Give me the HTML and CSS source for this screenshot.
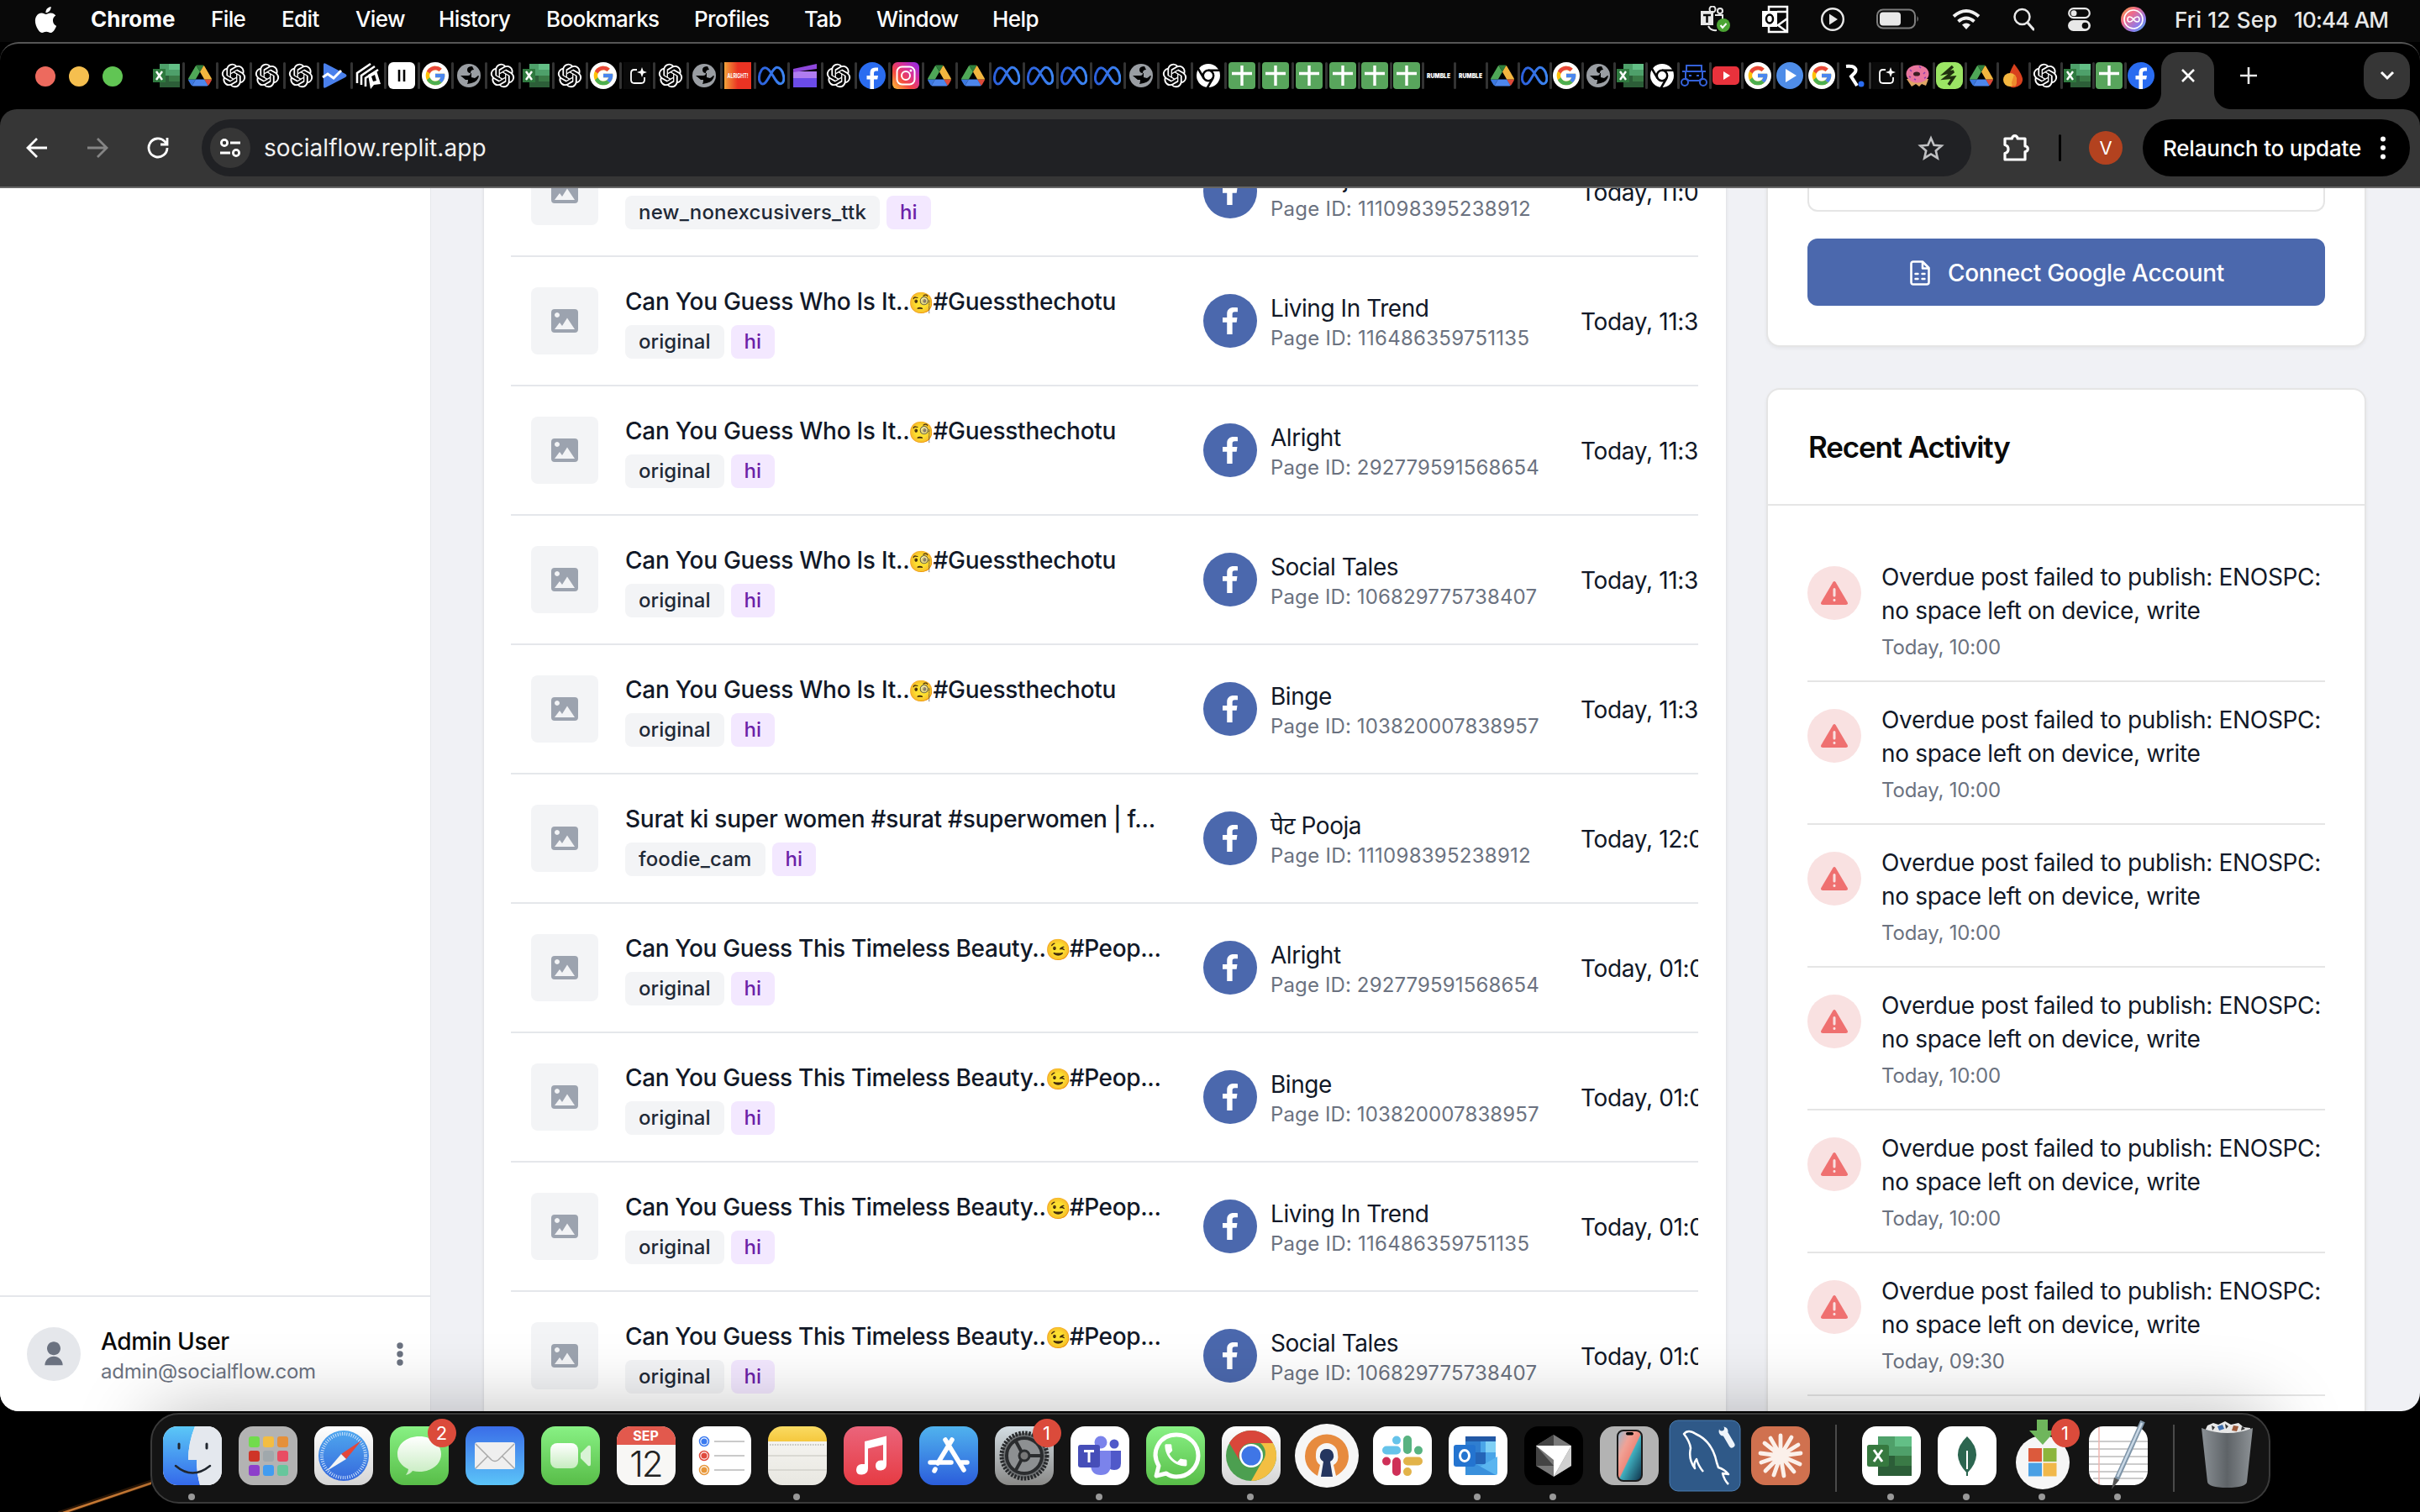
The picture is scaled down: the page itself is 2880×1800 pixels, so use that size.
FILE: index.html
```html
<!DOCTYPE html>
<html lang="en">
<head>
<meta charset="utf-8">
<title>SocialFlow</title>
<link rel="stylesheet" href="styles.css">
</head>
<body>
<svg class="defs" width="0" height="0" aria-hidden="true">
  <defs>
    <linearGradient id="g-ig" x1="0" y1="1" x2="1" y2="0"><stop offset="0" stop-color="#fec53a"/><stop offset=".35" stop-color="#f4483f"/><stop offset=".65" stop-color="#d62f9b"/><stop offset="1" stop-color="#8a2bf0"/></linearGradient>
    <linearGradient id="g-alright"><stop offset="0" stop-color="#f2a33a"/><stop offset=".5" stop-color="#ea3323"/></linearGradient>
    <linearGradient id="g-bubble" x1="0" y1="0" x2="0" y2="1"><stop offset="0" stop-color="#fff"/><stop offset="1" stop-color="#c7ecc0"/></linearGradient>
    <linearGradient id="g-finder" x1="0" y1="0" x2="0" y2="1"><stop offset="0" stop-color="#5bc8f7"/><stop offset="1" stop-color="#3469ea"/></linearGradient>
    <linearGradient id="g-safari" x1="0" y1="0" x2="0" y2="1"><stop offset="0" stop-color="#4fa7ee"/><stop offset="1" stop-color="#3568dc"/></linearGradient>
    <linearGradient id="g-phone" x1="0" y1="0" x2="1" y2="1"><stop offset="0" stop-color="#8fb8d0"/><stop offset=".3" stop-color="#f0a296"/><stop offset=".5" stop-color="#f08a7c"/><stop offset=".53" stop-color="#3fb0c0"/><stop offset="1" stop-color="#0d2c45"/></linearGradient>
    <linearGradient id="g-trash"><stop offset="0" stop-color="#8a9095"/><stop offset=".5" stop-color="#5e6367"/><stop offset="1" stop-color="#8d9296"/></linearGradient>
    <linearGradient id="g-siri" x1="0" y1="0" x2="1" y2="1"><stop offset="0" stop-color="#f0a33e"/><stop offset=".35" stop-color="#f06a8a"/><stop offset=".7" stop-color="#8f7bea"/><stop offset="1" stop-color="#45b6e8"/></linearGradient>
    <linearGradient id="g-meta"><stop offset="0" stop-color="#2b5fdc"/><stop offset="1" stop-color="#3d86f2"/></linearGradient>
  </defs>
  <symbol id="excel" viewBox="0 0 32 32"><path fill="#21a366" d="M8 2h24v28H8z"/><path fill="#63bf86" d="M19 2h13v7H19z"/><path fill="#3a7a46" d="M8 16h24v7H8z"/><path fill="#4ea06a" d="M8 2h11v7H8zM8 9h24v7H8z"/><path fill="#2c5e38" d="M8 16h11v14H8zM19 23h13v7H19z"/><path fill="#2f7a3f" d="M0 8h15v16H0z"/><path stroke="#fff" stroke-width="2.4" d="M4 11l7 10M11 11L4 21"/></symbol>
  <symbol id="drive" viewBox="0 0 87.3 78"><path fill="#3b78e0" d="m6.6 66.85 3.85 6.65c.8 1.4 1.95 2.5 3.3 3.3l13.75-23.8h-27.5c0 1.55.4 3.1 1.2 4.5z"/><path fill="#4fa757" d="m43.65 25-13.75-23.8c-1.35.8-2.5 1.9-3.3 3.3l-25.4 44a9.06 9.06 0 0 0-1.2 4.5h27.5z"/><path fill="#dc4a3a" d="m73.55 76.8c1.35-.8 2.5-1.9 3.3-3.3l1.6-2.75 7.65-13.25c.8-1.4 1.2-2.95 1.2-4.5h-27.502l5.852 11.5z"/><path fill="#2d7d3a" d="m43.65 25 13.75-23.8c-1.35-.8-2.9-1.2-4.5-1.2h-18.5c-1.6 0-3.15.45-4.5 1.2z"/><path fill="#4d86ec" d="m59.8 53h-32.3l-13.75 23.8c1.35.8 2.9 1.2 4.5 1.2h50.8c1.6 0 3.15-.45 4.5-1.2z"/><path fill="#f3b63f" d="m73.4 26.5-12.7-22c-.8-1.4-1.95-2.5-3.3-3.3l-13.75 23.8 16.15 28h27.45c0-1.55-.4-3.1-1.2-4.5z"/></symbol>
  <symbol id="gpt" viewBox="-1.5 -1.5 27 27"><path fill="#fff" d="M22.2819 9.8211a5.9847 5.9847 0 0 0-.5157-4.9108 6.0462 6.0462 0 0 0-6.5098-2.9A6.0651 6.0651 0 0 0 4.9807 4.1818a5.9847 5.9847 0 0 0-3.9977 2.9 6.0462 6.0462 0 0 0 .7427 7.0966 5.98 5.98 0 0 0 .511 4.9107 6.051 6.051 0 0 0 6.5146 2.9001A5.9847 5.9847 0 0 0 13.2599 24a6.0557 6.0557 0 0 0 5.7718-4.2058 5.9894 5.9894 0 0 0 3.9977-2.9001 6.0557 6.0557 0 0 0-.7475-7.0729zm-9.022 12.6081a4.4755 4.4755 0 0 1-2.8764-1.0408l.1419-.0804 4.7783-2.7582a.7948.7948 0 0 0 .3927-.6813v-6.7369l2.02 1.1686a.071.071 0 0 1 .038.052v5.5826a4.504 4.504 0 0 1-4.4945 4.4944zm-9.6607-4.1254a4.4708 4.4708 0 0 1-.5346-3.0137l.142.0852 4.783 2.7582a.7712.7712 0 0 0 .7806 0l5.8428-3.3685v2.3324a.0804.0804 0 0 1-.0332.0615L9.74 19.9502a4.4992 4.4992 0 0 1-6.1408-1.6464zM2.3408 7.8956a4.485 4.485 0 0 1 2.3655-1.9728V11.6a.7664.7664 0 0 0 .3879.6765l5.8144 3.3543-2.0201 1.1685a.0757.0757 0 0 1-.071 0l-4.8303-2.7865A4.504 4.504 0 0 1 2.3408 7.872zm16.5963 3.8558L13.1038 8.364 15.1192 7.2a.0757.0757 0 0 1 .071 0l4.8303 2.7913a4.4944 4.4944 0 0 1-.6765 8.1042v-5.6772a.79.79 0 0 0-.407-.667zm2.0107-3.0231l-.142-.0852-4.7735-2.7818a.7759.7759 0 0 0-.7854 0L9.409 9.2297V6.8974a.0662.0662 0 0 1 .0284-.0615l4.8303-2.7866a4.4992 4.4992 0 0 1 6.6802 4.66zM8.3065 12.863l-2.02-1.1638a.0804.0804 0 0 1-.038-.0567V6.0742a4.4992 4.4992 0 0 1 7.3757-3.4537l-.142.0805L8.704 5.459a.7948.7948 0 0 0-.3927.6813zm1.0976-2.3654l2.602-1.4998 2.6069 1.4998v2.9994l-2.5974 1.4997-2.6067-1.4997Z"/></symbol>
  <symbol id="pulse" viewBox="0 0 32 32"><path fill="#4a80ec" d="M3 3Q3 0 6 2l23 12q3 2 0 4L6 30q-3 2-3-1z"/><path fill="none" stroke="#fff" stroke-width="3" d="M2 18l6-4 7 5 9-9"/></symbol>
  <symbol id="linear" viewBox="0 0 32 32"><path fill="none" stroke="#fff" stroke-width="2.600" d="M3 25V13L19 2M8 27V16L24 5M13 29V19l15-10"/><path fill="#fff" d="M16 15l10-5 5 16-8 1-4 5z"/><path fill="#000" d="M20 17l4-2 2 7-4 1z"/></symbol>
  <symbol id="pause" viewBox="0 0 32 32"><rect width="32" height="32" rx="6" fill="#fff"/><path stroke="#000" stroke-width="2.600" d="M13 9v14M19 9v14"/></symbol>
  <symbol id="google" viewBox="0 0 48 48"><circle cx="24" cy="24" r="24" fill="#fff"/><g transform="translate(3.600 3.600) scale(.85)"><path fill="#FFC107" d="M43.611 20.083H42V20H24v8h11.303c-1.649 4.657-6.080 8-11.303 8-6.627 0-12-5.373-12-12s5.373-12 12-12c3.059 0 5.842 1.154 7.961 3.039l5.657-5.657C34.046 6.053 29.268 4 24 4 12.955 4 4 12.955 4 24s8.955 20 20 20 20-8.955 20-20c0-1.341-.138-2.650-.389-3.917z"/><path fill="#e8473a" d="M6.306 14.691l6.571 4.819C14.655 15.108 18.961 12 24 12c3.059 0 5.842 1.154 7.961 3.039l5.657-5.657C34.046 6.053 29.268 4 24 4 16.318 4 9.656 8.337 6.306 14.691z"/><path fill="#4CAF50" d="M24 44c5.166 0 9.860-1.977 13.409-5.192l-6.190-5.238A11.910 11.910 0 0 1 24 36c-5.202 0-9.619-3.317-11.283-7.946l-6.522 5.025C9.505 39.556 16.227 44 24 44z"/><path fill="#4a86ee" d="M43.611 20.083H42V20H24v8h11.303a12.040 12.040 0 0 1-4.087 5.571l6.190 5.238C36.971 39.205 44 34 44 24c0-1.341-.138-2.650-.389-3.917z"/></g></symbol>
  <symbol id="globe" viewBox="0 0 32 32"><circle cx="16" cy="16" r="14" fill="#9a9ea3"/><path fill="#000" d="M20 5q-6 0-6 4t4 4q0 3-3 3H6l6 5h3q0 3-1 5l5-1q8-2 9-9l-4 1q-2-4-6-4 0-4 4-4z"/><path fill="#9a9ea3" d="M19 12h5l2 5-3 2-4-1z"/></symbol>
  <symbol id="spark" viewBox="0 0 32 32"><rect width="32" height="32" fill="#0a0a0a"/><path fill="none" stroke="#fff" stroke-width="1.800" d="M16 9h-3q-4 0-4 4v8q0 4 4 4h8q4 0 4-4v-3"/><path fill="#fff" d="M22 6l1.600 4.400L28 12l-4.400 1.600L22 18l-1.600-4.400L16 12l4.400-1.600z"/></symbol>
  <symbol id="meta" viewBox="0 0 32 32"><path fill="none" stroke="url(#g-meta)" stroke-width="3" d="M16 13C13 8 8 4 4.500 9S0 23 4 25.500s7-4 12-12.500 8-8 11.500-4 5 14.500.5 16.500-8-6-12-12.500z"/></symbol>
  <symbol id="clap" viewBox="0 0 32 32"><path fill="#6b4be8" d="M2 11h28v19H2z"/><path fill="#b07cf0" d="M2 11h28v8H2z"/><path fill="#8f48dc" d="M2 8L30 2v6L2 12z"/></symbol>
  <symbol id="fb" viewBox="0 0 32 32"><circle cx="16" cy="16" r="16" fill="#2a6cf0"/><path fill="#fff" d="M13.500 32V20.500H9.500V16h4v-3.500q0-6 6-6h3.500v4h-2.500q-2.500 0-2.500 2.500v3h5l-.8 4.500H18V32z"/></symbol>
  <symbol id="insta" viewBox="0 0 32 32"><rect width="32" height="32" rx="6" fill="url(#g-ig)"/><rect x="5.500" y="5.500" width="21" height="21" rx="6" fill="none" stroke="#fff" stroke-width="2"/><circle cx="16" cy="16" r="5" fill="none" stroke="#fff" stroke-width="2"/><circle cx="22" cy="10" r="1.500" fill="#fff"/></symbol>
  <symbol id="chromebw" viewBox="0 0 32 32"><circle cx="16" cy="16" r="14" fill="#fff"/><circle cx="16" cy="16" r="6.200" fill="#fff" stroke="#000" stroke-width="2.500"/><path stroke="#000" stroke-width="2.500" d="M16 9.800h14M10.500 19L3.500 7M21.500 19l-7 12"/></symbol>
  <symbol id="sheets" viewBox="0 0 32 32"><rect width="32" height="32" rx="4" fill="#58a55c"/><path stroke="#fff" stroke-width="3.400" d="M16 4v24M4 13.500h24"/></symbol>
  <symbol id="robot" viewBox="0 0 32 32"><path fill="none" stroke="#3461d8" stroke-width="2" d="M7 4h18v7H7zM2 11h28M6 11v8l4 3h12l4-3v-8M10 16h3M19 16h3"/><circle cx="5" cy="24" r="4" fill="none" stroke="#3461d8" stroke-width="2"/><circle cx="27" cy="24" r="4" fill="none" stroke="#3461d8" stroke-width="2"/></symbol>
  <symbol id="yt" viewBox="0 0 32 32"><rect y="5" width="32" height="22" rx="5" fill="#e8323c"/><path fill="#fff" d="M13 11l8 5-8 5z"/></symbol>
  <symbol id="play" viewBox="0 0 32 32"><circle cx="16" cy="16" r="16" fill="#4f8de8"/><path fill="#fff" d="M11 8l13 8-13 8z"/></symbol>
  <symbol id="rdot" viewBox="0 0 32 32"><path fill="none" stroke="#fff" stroke-width="4" d="M7 5c10-1 14 3 10 8l-4 4 7 11"/><circle cx="25" cy="26" r="3.500" fill="#2a6cf0"/></symbol>
  <symbol id="donut" viewBox="0 0 32 32"><path fill="#dfa565" d="M3 20h26l-3 8-5-2-3 3-4-3-5 3z"/><ellipse cx="16" cy="14" rx="13.500" ry="10.500" fill="#e9769f"/><ellipse cx="15" cy="14" rx="4" ry="2.600" fill="#3a1c22"/><path stroke="#8a3fae" stroke-width="1.500" d="M7 9l2 2M18 5l2 2M25 12l-2 2M6 17l2 1M24 19l2-1M12 20l2 1"/></symbol>
  <symbol id="bolt" viewBox="0 0 32 32"><rect width="32" height="32" rx="9" fill="#9be564"/><path fill="none" stroke="#20300f" stroke-width="3.500" d="M20 5l-9 8 10-2-10 8 10-1-6 9"/></symbol>
  <symbol id="fire" viewBox="0 0 32 32"><path fill="#d9411e" d="M17 2q11 14 10 20t-9 8-8-8q0-8 7-20z"/><circle cx="12" cy="21" r="8" fill="#f4b63f"/><path fill="#ee8a2c" d="M17 15q5 6 2 13-5 2-5-4z"/></symbol>

  <symbol id="picture" viewBox="0 0 32 28"><path fill="#9ca3af" fill-rule="evenodd" d="M4 0h24q4 0 4 4v20q0 4-4 4H4q-4 0-4-4V4q0-4 4-4zm3 4a3 3 0 1 0 .01 0zM4 24h24L19 10.500 13 20l-3-4z"/></symbol>
  <symbol id="f" viewBox="0 0 264 512" preserveAspectRatio="none"><path fill="#fff" d="M76.700 512V283H0v-91h76.700v-71.700C76.700 42.400 124.300 0 193.800 0c33.300 0 61.900 2.500 70.200 3.600V85h-48.200c-37.800 0-45.100 18-45.100 44.300V192H256l-11.700 91h-73.600v229"/></symbol>
  <symbol id="warn" viewBox="0 0 32 28"><path fill="#ef7070" d="M14.300 1.200q1.700-2.200 3.400 0l14 23.800q1 3-1.900 3H2.200Q-.7 28 .3 25z"/><path stroke="#f9e1e1" stroke-width="3" stroke-linecap="round" d="M16 9.500v7.500M16 22.300v.1"/></symbol>
</svg>

<div class="desktop">
  <header class="menubar">
    <svg class="apple" viewBox="0 0 24 24"><path fill="#fff" d="M12.152 6.896c-.948 0-2.415-1.078-3.960-1.040-2.040.027-3.910 1.183-4.961 3.014-2.117 3.675-.546 9.103 1.519 12.090 1.013 1.454 2.208 3.090 3.792 3.039 1.520-.065 2.090-.987 3.935-.987 1.831 0 2.350.987 3.960.948 1.637-.026 2.676-1.480 3.676-2.948 1.156-1.688 1.636-3.325 1.662-3.415-.039-.013-3.182-1.221-3.220-4.857-.026-3.040 2.480-4.494 2.597-4.559-1.429-2.090-3.623-2.324-4.390-2.376-2-.156-3.675 1.090-4.610 1.090zM15.530 3.830c.843-1.012 1.400-2.427 1.245-3.830-1.207.052-2.662.805-3.532 1.818-.780.896-1.454 2.338-1.273 3.714 1.338.104 2.715-.688 3.559-1.701"/></svg>
    <nav class="menus"><b>Chrome</b><span>File</span><span>Edit</span><span>View</span><span>History</span><span>Bookmarks</span><span>Profiles</span><span>Tab</span><span>Window</span><span>Help</span></nav>
    <div class="status">
      <svg width="36" height="32" viewBox="0 0 36 32"><path fill="#e8e8e8" d="M1 6h15v17H1z"/><path fill="none" stroke="#0a0a0a" stroke-width="2.500" d="M4 11h9M8.500 11v9"/><g fill="none" stroke="#e8e8e8" stroke-width="2"><circle cx="15" cy="4" r="3.500"/><circle cx="24" cy="6" r="3"/><path d="M18 11h9v10M10 24q3 6 10 5"/></g><circle cx="28" cy="23" r="8" fill="#4ba533"/><path fill="none" stroke="#fff" stroke-width="2" d="M24.500 23l2.500 3 4.500-5"/></svg>
      <svg width="32" height="34" viewBox="0 0 32 34"><path fill="none" stroke="#fff" stroke-width="2.500" d="M8 8V2h22v30H8v-6M30 16l-11 8 11 8M18 8h12"/><path fill="#fff" d="M0 7h18v19H0z"/><ellipse cx="9" cy="16.500" rx="4" ry="5" fill="none" stroke="#000" stroke-width="2.500"/></svg>
      <svg width="28" height="28" viewBox="0 0 28 28"><circle cx="14" cy="14" r="12.800" fill="none" stroke="#e8e8e8" stroke-width="2.400"/><path fill="#e8e8e8" d="M10 7.500l10 6.500-10 6.500z"/></svg>
      <svg width="52" height="26" viewBox="0 0 52 26"><rect x="1" y="1.500" width="45" height="22" rx="7" fill="none" stroke="#7d7d7d" stroke-width="2"/><rect x="4" y="4.500" width="25" height="16" rx="4" fill="#e8e8e8"/><path fill="#7d7d7d" d="M48.500 9q3 3.500 0 7z"/></svg>
      <svg width="34" height="26" viewBox="0 0 34 26"><g fill="none" stroke="#f0f0f0" stroke-width="4"><path d="M2 9.500q15-13 30 0M7.500 15.500q9.500-8 19 0"/></g><path fill="#f0f0f0" d="M12 19.500q5-4 10 0l-5 5.500z"/></svg>
      <svg width="26" height="28" viewBox="0 0 26 28"><circle cx="11.500" cy="11" r="9" fill="none" stroke="#e8e8e8" stroke-width="2.500"/><path stroke="#e8e8e8" stroke-width="3" stroke-linecap="round" d="M18 18l7 8"/></svg>
      <svg class="cc" width="27" height="28" viewBox="0 0 27 28"><rect x="1.200" y="1.200" width="24.600" height="11" rx="5.500" fill="none" stroke="#e8e8e8" stroke-width="2.200"/><circle cx="7" cy="6.700" r="3.500" fill="#e8e8e8"/><rect y="15" width="27" height="13" rx="6.500" fill="#e8e8e8"/><circle cx="20.500" cy="21.500" r="3.800" fill="#0a0a0a"/></svg>
      <svg width="30" height="30" viewBox="0 0 30 30"><circle cx="15" cy="15" r="15" fill="url(#g-siri)"/><circle cx="15" cy="15" r="11" fill="none" stroke="#fff" stroke-width="1.600"/><path fill="none" stroke="#fff" stroke-width="1.600" d="M15 15c-3-4-7-4-7 0s4 4 7 0 7-4 7 0-4 4-7 0z"/></svg>
      <span class="date">Fri 12 Sep</span><span class="clock">10:44 AM</span>
    </div>
  </header>

  <section class="window">
    <div class="tabstrip">
      <div class="lights"><i class="red"></i><i class="yellow"></i><i class="green"></i></div>
      <div class="tabs">
        <div class="tab"><svg><use href="#excel"/></svg></div><div class="tab drv"><svg><use href="#drive"/></svg></div><div class="tab"><svg><use href="#gpt"/></svg></div><div class="tab"><svg><use href="#gpt"/></svg></div><div class="tab"><svg><use href="#gpt"/></svg></div><div class="tab"><svg><use href="#pulse"/></svg></div><div class="tab"><svg><use href="#linear"/></svg></div><div class="tab"><svg><use href="#pause"/></svg></div><div class="tab"><svg><use href="#google"/></svg></div><div class="tab"><svg><use href="#globe"/></svg></div>
        <div class="tab"><svg><use href="#gpt"/></svg></div><div class="tab"><svg><use href="#excel"/></svg></div><div class="tab"><svg><use href="#gpt"/></svg></div><div class="tab"><svg><use href="#google"/></svg></div><div class="tab"><svg><use href="#spark"/></svg></div><div class="tab"><svg><use href="#gpt"/></svg></div><div class="tab"><svg><use href="#globe"/></svg></div><div class="tab"><svg viewBox="0 0 32 32"><path fill="url(#g-alright)" d="M0 0h32v32H0z"/><text x="3.500" y="19" font-size="7" font-weight="700" fill="#fff" textLength="25" lengthAdjust="spacingAndGlyphs">ALRIGHT!</text></svg></div><div class="tab"><svg><use href="#meta"/></svg></div><div class="tab"><svg><use href="#clap"/></svg></div>
        <div class="tab"><svg><use href="#gpt"/></svg></div><div class="tab"><svg><use href="#fb"/></svg></div><div class="tab"><svg><use href="#insta"/></svg></div><div class="tab drv"><svg><use href="#drive"/></svg></div><div class="tab drv"><svg><use href="#drive"/></svg></div><div class="tab"><svg><use href="#meta"/></svg></div><div class="tab"><svg><use href="#meta"/></svg></div><div class="tab"><svg><use href="#meta"/></svg></div><div class="tab"><svg><use href="#meta"/></svg></div><div class="tab"><svg><use href="#globe"/></svg></div>
        <div class="tab"><svg><use href="#gpt"/></svg></div><div class="tab"><svg><use href="#chromebw"/></svg></div><div class="tab"><svg><use href="#sheets"/></svg></div><div class="tab"><svg><use href="#sheets"/></svg></div><div class="tab"><svg><use href="#sheets"/></svg></div><div class="tab narrow"><svg><use href="#sheets"/></svg></div><div class="tab narrow"><svg><use href="#sheets"/></svg></div><div class="tab narrow"><svg><use href="#sheets"/></svg></div><div class="tab narrow"><svg viewBox="0 0 32 32"><text x="2" y="19" font-size="8" font-weight="900" fill="#fff" textLength="28" lengthAdjust="spacingAndGlyphs">RUMBLE</text></svg></div><div class="tab narrow"><svg viewBox="0 0 32 32"><text x="2" y="19" font-size="8" font-weight="900" fill="#fff" textLength="28" lengthAdjust="spacingAndGlyphs">RUMBLE</text></svg></div>
        <div class="tab narrow drv"><svg><use href="#drive"/></svg></div><div class="tab narrow"><svg><use href="#meta"/></svg></div><div class="tab narrow"><svg><use href="#google"/></svg></div><div class="tab narrow"><svg><use href="#globe"/></svg></div><div class="tab narrow"><svg><use href="#excel"/></svg></div><div class="tab narrow"><svg><use href="#chromebw"/></svg></div><div class="tab narrow"><svg><use href="#robot"/></svg></div><div class="tab narrow"><svg><use href="#yt"/></svg></div><div class="tab narrow"><svg><use href="#google"/></svg></div><div class="tab narrow"><svg><use href="#play"/></svg></div>
        <div class="tab narrow"><svg><use href="#google"/></svg></div><div class="tab narrow"><svg><use href="#rdot"/></svg></div><div class="tab narrow"><svg><use href="#spark"/></svg></div><div class="tab narrow"><svg><use href="#donut"/></svg></div><div class="tab narrow"><svg><use href="#bolt"/></svg></div><div class="tab narrow drv"><svg><use href="#drive"/></svg></div><div class="tab narrow"><svg><use href="#fire"/></svg></div><div class="tab narrow"><svg><use href="#gpt"/></svg></div><div class="tab narrow"><svg><use href="#excel"/></svg></div><div class="tab narrow"><svg><use href="#sheets"/></svg></div>
        <div class="tab narrow last"><svg><use href="#fb"/></svg></div>
      </div>
      <div class="active-tab"><svg width="20" height="20" viewBox="0 0 20 20"><path stroke="#fff" stroke-width="2.600" d="M3 3l14 14M17 3L3 17"/></svg></div>
      <svg class="newtab" width="22" height="22" viewBox="0 0 22 22"><path stroke="#e8e8e8" stroke-width="2.600" d="M11 1v20M1 11h20"/></svg>
      <div class="tabsearch"><svg width="18" height="12" viewBox="0 0 18 12"><path fill="none" stroke="#fff" stroke-width="3" d="M2 2l7 7 7-7"/></svg></div>
    </div>

    <div class="toolbar">
      <div class="nav">
        <svg width="26" height="26" viewBox="0 0 26 26"><path fill="none" stroke="#fff" stroke-width="2.800" d="M25 13H3M13 2L2 13l11 11"/></svg>
        <svg width="26" height="26" viewBox="0 0 26 26"><path fill="none" stroke="#858585" stroke-width="2.800" d="M1 13h22M13 2l11 11-11 11"/></svg>
        <svg width="26" height="26" viewBox="0 0 26 26"><path fill="none" stroke="#fff" stroke-width="2.800" d="M24 13a11 11 0 1 1-3-7.600L24 9M24 1v8h-8"/></svg>
      </div>
      <div class="url">
        <span class="site"><svg width="26" height="24" viewBox="0 0 26 24"><g fill="none" stroke="#fff" stroke-width="2.800"><circle cx="6" cy="6" r="3.600"/><path d="M13 6h12M1 18h12"/><circle cx="20" cy="18" r="3.600"/></g></svg></span>
        <span class="address">socialflow.replit.app</span>
        <svg class="star" width="32" height="30" viewBox="0 0 32 30"><path fill="none" stroke="#c0c1c3" stroke-width="2.600" d="M16 3.500l3.600 8.200 9 .8-6.800 5.900 2 8.800L16 22.500l-7.800 4.700 2-8.800-6.800-5.900 9-.8z"/></svg>
      </div>
      <svg class="ext" width="34" height="34" viewBox="0 0 34 34"><path fill="none" stroke="#fff" stroke-width="3.200" stroke-linejoin="round" d="M4 6h8.500a3.300 3.300 0 0 1 6.600 0H28v9a3.300 3.300 0 0 1 0 6.600V31H4v-7.500q4-1 4-5t-4-5z"/></svg>
      <i class="sep"></i>
      <span class="profile">V</span>
      <div class="relaunch">Relaunch to update<svg width="8" height="28" viewBox="0 0 8 28"><g fill="#fff"><circle cx="4" cy="3.500" r="3"/><circle cx="4" cy="14" r="3"/><circle cx="4" cy="24.500" r="3"/></g></svg></div>
    </div>

    <div class="page">
      <aside class="sidebar">
        <div class="account">
          <span class="avatar"><svg width="32" height="32" viewBox="0 0 24 24"><path fill="#6b7280" d="M4 22a8 8 0 1 1 16 0H4zm8-9c-3.315 0-6-2.685-6-6s2.685-6 6-6 6 2.685 6 6-2.685 6-6 6z"/></svg></span>
          <div class="who"><div class="who-name">Admin User</div><div class="who-mail">admin@socialflow.com</div></div>
          <svg width="8" height="28" viewBox="0 0 8 28"><g fill="#6b7280"><circle cx="4" cy="4" r="3.700"/><circle cx="4" cy="14" r="3.700"/><circle cx="4" cy="24" r="3.700"/></g></svg>
        </div>
      </aside>

      <main class="posts"><div class="scroll">
        <div class="row"><span class="thumb"><svg><use href="#picture"/></svg></span><div class="info"><div class="title">&nbsp;</div><div class="tags"><span class="tag wide">new_nonexcusivers_ttk</span><span class="tag lang">hi</span></div></div><span class="fbc"><svg><use href="#f"/></svg></span><div class="pg"><div class="name">पेट Pooja</div><div class="pid loose">Page ID: 111098395238912</div></div><div class="time">Today, 11:00</div></div>
        <div class="row"><span class="thumb"><svg><use href="#picture"/></svg></span><div class="info"><div class="title">Can You Guess Who Is It..<span class="emoji">🧐</span>#Guessthechotu</div><div class="tags"><span class="tag">original</span><span class="tag lang">hi</span></div></div><span class="fbc"><svg><use href="#f"/></svg></span><div class="pg"><div class="name">Living In Trend</div><div class="pid loose">Page ID: 116486359751135</div></div><div class="time">Today, 11:30</div></div>
        <div class="row"><span class="thumb"><svg><use href="#picture"/></svg></span><div class="info"><div class="title">Can You Guess Who Is It..<span class="emoji">🧐</span>#Guessthechotu</div><div class="tags"><span class="tag">original</span><span class="tag lang">hi</span></div></div><span class="fbc"><svg><use href="#f"/></svg></span><div class="pg"><div class="name">Alright</div><div class="pid">Page ID: 292779591568654</div></div><div class="time">Today, 11:30</div></div>
        <div class="row"><span class="thumb"><svg><use href="#picture"/></svg></span><div class="info"><div class="title">Can You Guess Who Is It..<span class="emoji">🧐</span>#Guessthechotu</div><div class="tags"><span class="tag">original</span><span class="tag lang">hi</span></div></div><span class="fbc"><svg><use href="#f"/></svg></span><div class="pg"><div class="name">Social Tales</div><div class="pid">Page ID: 106829775738407</div></div><div class="time">Today, 11:30</div></div>
        <div class="row"><span class="thumb"><svg><use href="#picture"/></svg></span><div class="info"><div class="title">Can You Guess Who Is It..<span class="emoji">🧐</span>#Guessthechotu</div><div class="tags"><span class="tag">original</span><span class="tag lang">hi</span></div></div><span class="fbc"><svg><use href="#f"/></svg></span><div class="pg"><div class="name">Binge</div><div class="pid">Page ID: 103820007838957</div></div><div class="time">Today, 11:30</div></div>
        <div class="row"><span class="thumb"><svg><use href="#picture"/></svg></span><div class="info"><div class="title">Surat ki super women #surat #superwomen | f...</div><div class="tags"><span class="tag wide">foodie_cam</span><span class="tag lang">hi</span></div></div><span class="fbc"><svg><use href="#f"/></svg></span><div class="pg"><div class="name">पेट Pooja</div><div class="pid loose">Page ID: 111098395238912</div></div><div class="time">Today, 12:00</div></div>
        <div class="row"><span class="thumb"><svg><use href="#picture"/></svg></span><div class="info"><div class="title long">Can You Guess This Timeless Beauty..<span class="emoji">😉</span>#Peop...</div><div class="tags"><span class="tag">original</span><span class="tag lang">hi</span></div></div><span class="fbc"><svg><use href="#f"/></svg></span><div class="pg"><div class="name">Alright</div><div class="pid">Page ID: 292779591568654</div></div><div class="time">Today, 01:00</div></div>
        <div class="row"><span class="thumb"><svg><use href="#picture"/></svg></span><div class="info"><div class="title long">Can You Guess This Timeless Beauty..<span class="emoji">😉</span>#Peop...</div><div class="tags"><span class="tag">original</span><span class="tag lang">hi</span></div></div><span class="fbc"><svg><use href="#f"/></svg></span><div class="pg"><div class="name">Binge</div><div class="pid">Page ID: 103820007838957</div></div><div class="time">Today, 01:00</div></div>
        <div class="row"><span class="thumb"><svg><use href="#picture"/></svg></span><div class="info"><div class="title long">Can You Guess This Timeless Beauty..<span class="emoji">😉</span>#Peop...</div><div class="tags"><span class="tag">original</span><span class="tag lang">hi</span></div></div><span class="fbc"><svg><use href="#f"/></svg></span><div class="pg"><div class="name">Living In Trend</div><div class="pid loose">Page ID: 116486359751135</div></div><div class="time">Today, 01:00</div></div>
        <div class="row"><span class="thumb"><svg><use href="#picture"/></svg></span><div class="info"><div class="title long">Can You Guess This Timeless Beauty..<span class="emoji">😉</span>#Peop...</div><div class="tags"><span class="tag">original</span><span class="tag lang">hi</span></div></div><span class="fbc"><svg><use href="#f"/></svg></span><div class="pg"><div class="name">Social Tales</div><div class="pid">Page ID: 106829775738407</div></div><div class="time">Today, 01:00</div></div>
      </div></main>

      <div class="side">
        <div class="card connect">
          <div class="field"></div>
          <div class="button"><svg width="24" height="30" viewBox="0 0 24 30"><path fill="none" stroke="#fff" stroke-width="2.600" stroke-linejoin="round" d="M4 1.500h11l7.500 7.500v17q0 2.500-2.500 2.500H4q-2.500 0-2.500-2.500V4Q1.500 1.500 4 1.500zM15 2v7.500h7"/><path stroke="#fff" stroke-width="2.400" stroke-linecap="round" d="M6.500 16h3M14.500 16h3M6.500 22h3M14.500 22h3"/></svg>Connect Google Account</div>
        </div>
        <div class="card activity">
          <h2>Recent Activity</h2>
          <div class="feed">
            <div class="event"><span class="alert"><svg><use href="#warn"/></svg></span><div><p>Overdue post failed to publish: ENOSPC:<br>no space left on device, write</p><small>Today, 10:00</small></div></div>
            <div class="event"><span class="alert"><svg><use href="#warn"/></svg></span><div><p>Overdue post failed to publish: ENOSPC:<br>no space left on device, write</p><small>Today, 10:00</small></div></div>
            <div class="event"><span class="alert"><svg><use href="#warn"/></svg></span><div><p>Overdue post failed to publish: ENOSPC:<br>no space left on device, write</p><small>Today, 10:00</small></div></div>
            <div class="event"><span class="alert"><svg><use href="#warn"/></svg></span><div><p>Overdue post failed to publish: ENOSPC:<br>no space left on device, write</p><small>Today, 10:00</small></div></div>
            <div class="event"><span class="alert"><svg><use href="#warn"/></svg></span><div><p>Overdue post failed to publish: ENOSPC:<br>no space left on device, write</p><small>Today, 10:00</small></div></div>
            <div class="event"><span class="alert"><svg><use href="#warn"/></svg></span><div><p>Overdue post failed to publish: ENOSPC:<br>no space left on device, write</p><small>Today, 09:30</small></div></div>
          </div>
        </div>
      </div>
    </div>
  </section>

  <footer class="dockbar">
    <svg class="streak" width="180" height="120" viewBox="0 0 180 120"><path stroke="#6b3a12" stroke-width="6" opacity=".4" d="M70 122L182 84"/><path stroke="#c87a35" stroke-width="2.500" d="M75 121L182 85"/></svg>
    <div class="dock">
      <div class="app run finder"><svg viewBox="0 0 70 70"><path fill="#e4e8ee" d="M38 0h16q16 0 16 16v38q0 16-16 16H44z"/><path fill="url(#g-finder)" d="M16 0h22Q30 20 30 40h10q0 16 4 30H16Q0 70 0 54V16Q0 0 16 0z"/><path fill="#e4e8ee" d="M38 0Q30 20 30 40h10q0 16 4 30h12V0z"/><path stroke="#20262e" stroke-width="3" stroke-linecap="round" d="M19 21v5M52 21v5"/><path fill="none" stroke="#20262e" stroke-width="2.500" stroke-linecap="round" d="M15 47q20 17 41 0"/></svg></div>
      <div class="app launch"><svg viewBox="0 0 70 70"><g><rect x="12" y="12" width="13" height="13" rx="3" fill="#71dc4c"/><rect x="29" y="12" width="13" height="13" rx="3" fill="#f3bd42"/><rect x="46" y="12" width="13" height="13" rx="3" fill="#e5903a"/><rect x="12" y="29" width="13" height="13" rx="3" fill="#cf3427"/><rect x="29" y="29" width="13" height="13" rx="3" fill="#a0a8ac"/><rect x="46" y="29" width="13" height="13" rx="3" fill="#e94d63"/><rect x="12" y="46" width="13" height="13" rx="3" fill="#8d3fcb"/><rect x="29" y="46" width="13" height="13" rx="3" fill="#429cf0"/><rect x="46" y="46" width="13" height="13" rx="3" fill="#67c69c"/></g></svg></div>
      <div class="app silver"><svg viewBox="0 0 70 70"><circle cx="35" cy="35" r="30" fill="url(#g-safari)"/><circle cx="35" cy="35" r="26" fill="none" stroke="#cfe4fb" stroke-width="4" stroke-dasharray="1 1.722"/><path fill="#e4473a" d="M56 17L38 39l-6-6z"/><path fill="#f4f4f4" d="M15 53l17-20 6 6z"/></svg></div>
      <div class="app lime"><svg viewBox="0 0 70 70"><path fill="url(#g-bubble)" d="M35 12c15 0 26 9 26 21S50 54 35 54q-4 0-8-1-3 4-8 5 3-4 3-7C14 47 9 41 9 33c0-12 11-21 26-21z"/></svg><em>2</em></div>
      <div class="app mail"><svg viewBox="0 0 70 70"><rect x="11" y="19" width="48" height="32" rx="3" fill="#efefef"/><path fill="none" stroke="#a9a9a9" stroke-width="1.500" d="M12 21l19 19q4 3 8 0l19-19M12 50l14-14M58 50L44 36"/></svg></div>
      <div class="app lime"><svg viewBox="0 0 70 70"><rect x="11" y="20" width="33" height="30" rx="8" fill="url(#g-bubble)"/><path fill="#d9f3d5" d="M47 32l9-9q3-1 3 2v20q0 3-3 2l-9-9z"/></svg></div>
      <div class="app cal"><b>SEP</b><span>12</span></div>
      <div class="app white"><svg viewBox="0 0 70 70"><path stroke="#b9b9b9" stroke-width="1.500" d="M26 18h36M26 35h36M26 52h36"/><g stroke-width="1.500" fill="none"><circle cx="14" cy="18" r="5.500" stroke="#3a7af0"/><circle cx="14" cy="35" r="5.500" stroke="#e04a3e"/><circle cx="14" cy="52" r="5.500" stroke="#e8973a"/></g><circle cx="14" cy="18" r="3.600" fill="#3a7af0"/><circle cx="14" cy="35" r="3.600" fill="#e04a3e"/><circle cx="14" cy="52" r="3.600" fill="#e8973a"/></svg></div>
      <div class="app run notes"><svg viewBox="0 0 70 70"><path stroke="#d2d2cc" stroke-width="1.500" d="M0 35h70M0 52h70"/><path stroke="#b5b5b0" stroke-width="1.500" stroke-dasharray="1.500 1.500" d="M2 22h66"/></svg></div>
      <div class="app music"><svg viewBox="0 0 70 70"><path fill="#fff" d="M25 18l26-6.500V45q0 7-6.500 7.500T38 47t6-6.500h3V22l-18 4.500V50q0 7-7 7.500T15 52t6-7h4z"/></svg></div>
      <div class="app store"><svg viewBox="0 0 70 70"><path fill="none" stroke="#fff" stroke-width="5.500" stroke-linecap="round" d="M39 16L22 44M31 16l22 36M13 43h25M48 43h9M19 51l-1 2"/></svg></div>
      <div class="app gear"><svg viewBox="0 0 70 70"><circle cx="35" cy="35" r="27" fill="#6f7274" stroke="#27292b" stroke-width="5" stroke-dasharray="2.500 1.500"/><circle cx="35" cy="35" r="21" fill="#8d9092" stroke="#2a2c2e" stroke-width="4"/><circle cx="35" cy="35" r="6" fill="#777" stroke="#2a2c2e" stroke-width="3"/><path stroke="#2a2c2e" stroke-width="4" d="M40 35h16M32 31l-8-15M32 39l-8 15"/></svg><em>1</em></div>
      <div class="app run white"><svg viewBox="0 0 70 70"><circle cx="36" cy="19" r="7.500" fill="#7b83eb"/><circle cx="52" cy="21" r="5.500" fill="#5059c9"/><path fill="#5059c9" d="M43 29h17v15q0 8-8 8t-9-8z"/><path fill="#7b83eb" d="M24 29h24v16q0 13-12 13T24 45z"/><rect x="9" y="22" width="26" height="27" rx="3" fill="#464eb8"/><path stroke="#fff" stroke-width="3" d="M16 29.500h12M22 29.500V43"/></svg></div>
      <div class="app lime"><svg viewBox="0 0 70 70"><path fill="none" stroke="#fff" stroke-width="5" stroke-linejoin="round" d="M12 59l3-12C5 30 16 10 36 10c16 0 26 12 26 25S51 60 36 60q-7 0-12-4z"/><path fill="#fff" transform="translate(18 17) scale(1.450)" d="M6.620 10.790c1.440 2.830 3.760 5.140 6.590 6.590l2.200-2.200c.27-.27.67-.36 1.020-.24 1.120.37 2.330.57 3.570.57.55 0 1 .45 1 1V20c0 .55-.45 1-1 1-9.390 0-17-7.610-17-17 0-.55.45-1 1-1h3.500c.55 0 1 .45 1 1 0 1.250.2 2.450.57 3.570.11.35.03.74-.25 1.020l-2.200 2.200z"/></svg></div>
      <div class="app run silver"><svg viewBox="0 0 70 70"><circle cx="35" cy="35" r="30" fill="#4c9f50"/><path fill="#d9473a" d="M9 20a30 30 0 0 1 52 0H35a15 15 0 0 0-13 22z"/><path fill="#f3bf42" d="M61 20a30 30 0 0 1-26 45l13-23a15 15 0 0 0-2-22z"/><circle cx="35" cy="35" r="14" fill="#fff"/><circle cx="35" cy="35" r="11.500" fill="#3f76e6"/></svg></div>
      <div class="app bare"><svg viewBox="0 0 70 70"><circle cx="35" cy="35" r="38" fill="#f6f6f6"/><path fill="#e78b3e" d="M24 59Q9 50 9 35.500A26 26 0 0 1 61 35.500Q61 50 46 59l-3-13q7-4 5-13a13 13 0 0 0-26 0q-1 9 5 13z"/><path fill="#25365f" d="M35 27a8 8 0 0 1 4 15l3 18H28l3-18a8 8 0 0 1 4-15z"/></svg></div>
      <div class="app white"><svg viewBox="0 0 70 70"><g stroke-width="10" stroke-linecap="round"><path stroke="#65c3ea" d="M28 16.500v.1M16 28.500h12"/><path stroke="#58b381" d="M41 16v12M54 28.500v.1"/><path stroke="#cf3058" d="M28 42v12M16 41.500v.1"/><path stroke="#e2b34a" d="M41 41.500h13M41 54v.1"/></g></svg></div>
      <div class="app run white"><svg viewBox="0 0 70 70"><path fill="#4aa5e8" d="M20 12h36v46H20z"/><path fill="#2258a5" d="M20 12h36v6H20z"/><path fill="#2f7ed0" d="M20 18h18v13H20z"/><path fill="#7fd0f5" d="M44 18h12v13H44z"/><path fill="#2465b8" d="M20 31h24v14H20z"/><path fill="#5ab5f0" d="M20 58l38-22v20q0 2-2 2z"/><path fill="#3a90dc" d="M20 58V38l36 20z"/><rect x="6" y="22" width="26" height="26" rx="3" fill="#2474d0"/><ellipse cx="19" cy="35" rx="5.500" ry="6.500" fill="none" stroke="#fff" stroke-width="3"/></svg></div>
      <div class="app run black"><svg viewBox="0 0 70 70"><path fill="#7a7a7a" d="M35 10l21 13v24L35 60 14 47V23z"/><path fill="#444" d="M14 23l21-13v13zM14 23l21 24-21 0z"/><path fill="#fff" d="M14 23h42L35 60V40z"/><path fill="#d0d0d0" d="M56 23v24L35 60z"/></svg></div>
      <div class="app grey"><svg viewBox="0 0 70 70"><rect x="21" y="5" width="29" height="60" rx="7" fill="url(#g-phone)" stroke="#1b1b1b" stroke-width="2"/><rect x="31" y="7" width="9" height="3.500" rx="1.700" fill="#000"/></svg></div>
      <div class="app bare"><svg viewBox="0 0 70 70"><rect x="-7" y="-7" width="84" height="84" rx="10" fill="#2f5988" stroke="#4b7fb4" stroke-width="1"/><path fill="none" stroke="#fff" stroke-width="2.500" stroke-linejoin="round" d="M33 54q-6-7-8-15-4 5-2 11-8-11-5-24-1-8-8-17 5-6 14 0 20 9 25 34l2 6q7 2 12 8l-7-1q2 8 7 13"/><path stroke="#eef4fb" stroke-width="7" stroke-linecap="round" d="M60 10l7 12"/><circle cx="57" cy="6" r="5.500" fill="#eef4fb"/><circle cx="55" cy="2.500" r="3" fill="#2f5988"/></svg></div>
      <div class="app clay"><svg viewBox="0 0 70 70"><path stroke="#fbf0ea" stroke-width="4.800" stroke-linecap="round" d="M35 35V11M35 35l13-22M35 35l21-13M35 35l24-3M35 35l23 10M35 35l16 19M35 35l4 24M35 35l-8 23M35 35L17 53M35 35l-23 8M35 35l-24-3M35 35L16 20M35 35L23 14"/></svg></div>
      <i class="bar"></i>
      <div class="app run white"><svg viewBox="0 0 70 70"><path fill="#4fa06a" d="M19 12h40v47H19z"/><path fill="#63bf86" d="M39 12h20v12H39z"/><path fill="#3a7a46" d="M39 35h20v12H39z"/><path fill="#2c5e38" d="M19 35h20v12h20v12H19z"/><rect x="6" y="22" width="26" height="26" rx="2.500" fill="#36793f"/><path stroke="#fff" stroke-width="3" d="M14 28l10 14M24 28L14 42"/></svg></div>
      <div class="app run white"><svg viewBox="0 0 70 70"><path fill="#2c6650" d="M35 12q22 21 0 44Q13 33 35 12z"/><path stroke="#fff" stroke-width="2" d="M35 29v22"/><path stroke="#2c6650" stroke-width="2" d="M35 51v8"/></svg></div>
      <div class="app run bare"><svg viewBox="0 0 70 70"><circle cx="35" cy="43" r="32" fill="#f6f6f6"/><path fill="#dc5a3c" d="M18 26h16v16H18z"/><path fill="#8cb53c" d="M35.500 26h16v16h-16z"/><path fill="#4aa0e4" d="M18 43.500h16v16H18z"/><path fill="#f1b84a" d="M35.500 43.500h16v16h-16z"/><path fill="#6fb65c" d="M28-8h13V5h9L35 22 19 5h9z"/></svg><em>1</em></div>
      <div class="app run white"><svg viewBox="0 0 70 70"><path stroke="#bcbcbc" stroke-width="1.500" d="M0 18h70M0 27h70M0 36h70M0 45h70M0 54h70M5 62h60"/><path stroke="#f0b6b0" stroke-width="1.500" d="M12 1v68"/><path stroke="#7f95a8" stroke-width="6" d="M64-6L33 63"/><path stroke="#c9d8e6" stroke-width="2.500" d="M63-4L34 60"/><path fill="#555" d="M30 61l6 3-9 11z"/></svg></div>
      <i class="bar"></i>
      <div class="app bare"><svg viewBox="0 0 70 70"><path fill="#e8e8e8" d="M5 8l4-9 7-3 6 2 8-4 7 4 9-2 6 5 8 1 1 7z"/><path fill="#3f6fae" d="M21 0l6-2 2 5-6 2z"/><path fill="#9c5a3a" d="M40-1l6 1-2 6-6-1z"/><path fill="#333" d="M14-1l4 2-3 4zM30-3l4 3-3 3zM50 0l4 3-5 2z"/><path fill="url(#g-trash)" d="M2 2q31 12 61 0l-7 64q-1 7-23.500 7T9 66z"/></svg></div>
    </div>
  </footer>
</div>
</body>
</html>
```
FILE: styles.css
```css
* { box-sizing: border-box; }
body { margin: 0; background: #000; font-family: Inter, "Noto Sans", sans-serif; }
svg { display: block; flex: none; }
.defs { position: absolute; }
p, h2 { margin: 0; }

.desktop { width: 2880px; height: 1800px; display: flex; flex-direction: column; overflow: hidden; background: #000; }

/* menu bar */
.menubar { height: 50px; flex: none; display: flex; align-items: center; background: #090909; color: #fff; font-size: 26px; font-weight: 500; padding: 0 38px 4px 39px; }
.apple { width: 31px; height: 31px; margin-right: 38px; }
.menus { display: grid; grid-template-columns: 143px 84px 88px 99px 128px 176px 131px 86px 138px auto; letter-spacing: -.6px; line-height: 32px; }
.menus b { letter-spacing: 0; }
.status { margin-left: auto; display: flex; align-items: center; gap: 38px; color: #e8e8e8; white-space: nowrap; }
.status .cc { margin: 0 -2px 0 2px; }
.date { width: 123px; margin-left: -4px; letter-spacing: .2px; }
.clock { width: 112px; margin-left: -19px; letter-spacing: -.8px; }

/* browser window */
.window { height: 1630px; flex: none; display: flex; flex-direction: column; background: #000; border-top: 2px solid #555; border-radius: 22px; overflow: hidden; }
.tabstrip { height: 78px; flex: none; display: flex; align-items: center; }
.lights { display: flex; gap: 16px; padding-left: 42px; width: 182px; flex: none; }
.lights i { width: 24px; height: 24px; border-radius: 50%; }
.red { background: #ed6a5e; }
.yellow { background: #f5bf4f; }
.green { background: #61c554; }
.tabs { display: flex; width: 2390px; flex: none; margin-bottom: 2px; }
.tab { width: 40px; height: 32px; display: flex; align-items: center; }
.tab svg { width: 32px; height: 32px; }
.tab.drv svg { width: 28px; margin: 0 2px; }
.tab::after { content: ""; width: 3px; height: 32px; margin-left: 2.500px; background: #333; border-radius: 2px; }
.tab.narrow { width: 38px; }
.tab.narrow::after { margin-left: 1.500px; }
.tab.last::after { display: none; }
.active-tab { position: relative; width: 63px; height: 68px; align-self: flex-end; background: #363636; border-radius: 20px 20px 0 0; display: flex; justify-content: center; padding-top: 18px; }
.active-tab::before, .active-tab::after { content: ""; position: absolute; bottom: 0; width: 20px; height: 20px; }
.active-tab::before { right: 100%; background: radial-gradient(circle at 0 0, #000 19.500px, #363636 20.500px); }
.active-tab::after { left: 100%; background: radial-gradient(circle at 100% 0, #000 19.500px, #363636 20.500px); }
.newtab { margin: 0 0 2px 30px; }
.tabsearch { margin: 0 12px 2px auto; width: 55px; height: 56px; border-radius: 20px; background: #363636; display: flex; align-items: center; justify-content: center; }

.toolbar { height: 94px; flex: none; display: flex; align-items: center; background: #363636; border-bottom: 2px solid #666; border-radius: 20px 20px 0 0; padding-right: 12px; }
.nav { display: flex; gap: 46px; padding-left: 31px; width: 240px; flex: none; }
.url { width: 2106px; height: 68px; flex: none; border-radius: 34px; background: #202124; display: flex; align-items: center; padding: 0 32px 0 10px; color: #f1f1f1; font-size: 28px; letter-spacing: .05px; }
.site { width: 48px; height: 48px; border-radius: 50%; background: #363636; display: flex; align-items: center; justify-content: center; margin-right: 16px; }
.star { margin-left: auto; }
.ext { margin-left: 36px; }
.sep { width: 3px; height: 32px; background: #000; border-radius: 2px; margin-left: 34px; }
.profile { width: 40px; height: 40px; border-radius: 50%; background: #b3421f; color: #fff; font-size: 22px; display: flex; align-items: center; justify-content: center; margin-left: 33px; }
.relaunch { margin-left: auto; width: 318px; height: 68px; border-radius: 34px; background: #000; color: #fff; font-size: 26px; font-weight: 500; letter-spacing: -.2px; display: flex; align-items: center; justify-content: space-between; padding: 0 28px 0 24px; white-space: nowrap; }

/* web page */
.page { flex: 1; min-height: 0; display: flex; overflow: hidden; background: #f0f1f5; color: #111827; }
.sidebar { width: 513px; flex: none; background: #fff; border-right: 1px solid #e5e7eb; display: flex; flex-direction: column; justify-content: flex-end; }
.account { height: 138px; border-top: 2px solid #e5e7eb; display: flex; align-items: center; padding: 0 32px 0 32px; }
.avatar { width: 64px; height: 64px; border-radius: 50%; background: #e5e7eb; display: flex; align-items: center; justify-content: center; margin-right: 24px; }
.who { flex: 1; color: #0a0a0a; padding-top: 1px; }
.who-name { font-size: 28px; line-height: 40px; font-weight: 500; letter-spacing: -.35px; }
.who-mail { font-size: 24px; line-height: 32px; color: #6b7280; letter-spacing: -.25px; }

.posts { width: 1478px; flex: none; margin: -72px 0 0 63px; height: 1560px; background: #fff; box-shadow: 0 0 4px rgba(0,0,0,.12); padding-left: 32px; }
.scroll { width: 1413px; overflow: hidden; }
.row { height: 154px; border-bottom: 2px solid #e5e7eb; padding-left: 24px; display: flex; align-items: center; white-space: nowrap; }
.thumb { width: 80px; height: 80px; flex: none; border-radius: 8px; background: #f3f4f6; display: flex; align-items: center; justify-content: center; margin-right: 32px; }
.thumb svg { width: 32px; height: 28px; }
.info { width: 688px; flex: none; padding-top: 1px; }
.title { height: 40px; font-size: 28px; line-height: 40px; font-weight: 500; letter-spacing: -.26px; }
.title.long { letter-spacing: -.35px; }
.emoji { display: inline-block; width: 28px; font-size: 24.500px; letter-spacing: 0; line-height: 30px; margin: 0 1px 0 -1px; }
.tags { display: flex; gap: 8px; margin-top: 8px; }
.tag { height: 40px; line-height: 40px; padding: 0 16px; border-radius: 8px; background: #f3f4f6; color: #1f2937; font-size: 24px; font-weight: 500; letter-spacing: .05px; }
.tag.wide { letter-spacing: .2px; }
.tag.lang { background: #f3e8ff; color: #6b21a8; }
.fbc { width: 64px; height: 64px; flex: none; border-radius: 50%; background: #4b68ad; display: flex; align-items: center; justify-content: center; margin-right: 16px; }
.fbc svg { width: 18px; height: 32px; }
.pg { width: 369px; flex: none; padding-top: 1px; }
.name { font-size: 28px; line-height: 40px; height: 40px; letter-spacing: -.45px; }
.pid { font-size: 24px; line-height: 32px; color: #6b7280; letter-spacing: .13px; }
.pid.loose { letter-spacing: .26px; }
.time { font-size: 28px; line-height: 40px; letter-spacing: -.35px; padding-top: 1px; }

.side { width: 714px; flex: none; margin: -24px 0 0 48px; }
.card { background: #fff; border: 2px solid #e5e5e5; border-radius: 16px; box-shadow: 0 2px 4px rgba(0,0,0,.05); padding: 0 48px; }
.connect { height: 213px; padding: 0 47px; }
.field { height: 50px; border: 2px solid #e5e5e5; border-top: 0; border-radius: 0 0 12px 12px; }
.button { margin-top: 32px; height: 80px; border-radius: 12px; background: #4b68ad; color: #fff; font-size: 28px; font-weight: 500; letter-spacing: -.31px; display: flex; align-items: center; justify-content: center; gap: 21px; padding: 1px 0 0 2px; }
.activity { margin-top: 49px; padding: 0; height: 1260px; }
.activity h2 { height: 138px; border-bottom: 2px solid #e5e5e5; padding: 0 48px; font-size: 35px; font-weight: 600; line-height: 136px; letter-spacing: -1.150px; color: #0a0a0a; }
.feed { padding: 40px 47px 0; }
.event { display: flex; align-items: flex-start; gap: 24px; padding: 25px 0 23px; border-bottom: 2px solid #e5e5e5; white-space: nowrap; }
.alert { width: 64px; height: 64px; flex: none; margin-top: 7px; border-radius: 50%; background: #f9e1e1; display: flex; align-items: center; justify-content: center; }
.alert svg { width: 32px; height: 28px; }
.event p { font-size: 28px; line-height: 40px; letter-spacing: -.34px; }
.event small { display: block; margin-top: 8px; font-size: 24px; line-height: 32px; color: #6b7280; letter-spacing: -.17px; }

/* dock */
.dockbar { position: relative; height: 120px; flex: none; display: flex; justify-content: center; padding-top: 2px; }
.streak { position: absolute; left: 0; top: 0; }
.dock { position: relative; width: 2523px; height: 108px; background: #141414; border: 2px solid #3a3a3a; border-radius: 34px; box-shadow: 0 0 90px rgba(0,0,0,.28); display: flex; gap: 20px; padding: 14px 13px; }
.app { position: relative; width: 70px; height: 70px; flex: none; border-radius: 17px; }
.app svg { width: 70px; height: 70px; overflow: visible; }
.app.run::after { content: ""; position: absolute; left: 30px; top: 80px; width: 8px; height: 8px; border-radius: 50%; background: #999; }
.app em { position: absolute; right: -9px; top: -9px; width: 34px; height: 34px; border-radius: 50%; background: #db4b3b; color: #fff; font-style: normal; font-size: 22px; line-height: 34px; text-align: center; }
.finder { overflow: visible; }
.finder svg { overflow: hidden; border-radius: 17px; }
.finder, .white { background: #fff; }
.silver { background: linear-gradient(#fff, #d5d5d5); }
.launch, .grey { background: #b3b3b3; }
.lime { background: linear-gradient(#88f184, #58bd48); }
.mail { background: linear-gradient(#3a6de8, #5bc4f8); }
.notes { background: linear-gradient(#fadb63, #f5c83d 18px, #f4f3ef 18px, #e8e7e1); }
.music { background: linear-gradient(#eb647b, #e63b43); }
.store { background: linear-gradient(#50b3ee, #2b5ddb); }
.gear { background: linear-gradient(#d3dde3, #8a8a88); }
.black { background: #000; }
.clay { background: #d0714f; }
.cal { background: #f8f7f5; overflow: hidden; display: flex; flex-direction: column; align-items: center; }
.cal b { width: 70px; height: 22px; background: #e2594d; color: #fff; font-size: 16px; line-height: 23px; text-align: center; }
.cal span { font-size: 42px; line-height: 46px; font-weight: 300; color: #222; letter-spacing: -2px; }
.bar { width: 2px; height: 80px; margin: -2px 10px 0; background: #4a4a4a; flex: none; }
```
